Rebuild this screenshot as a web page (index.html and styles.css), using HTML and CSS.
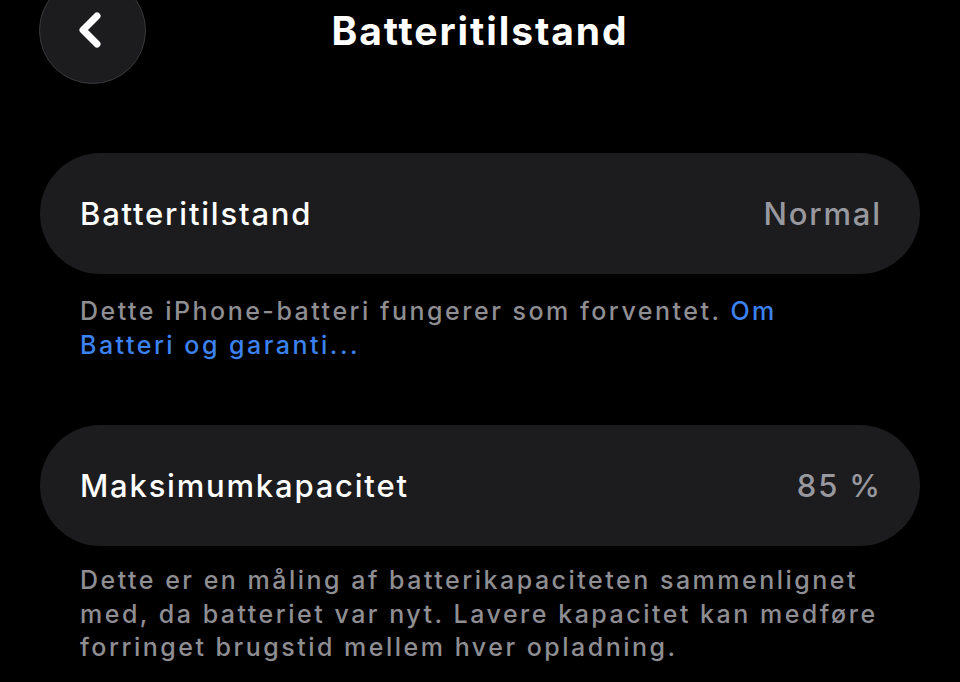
FILE: index.html
```html
<!DOCTYPE html>
<html>
  <head>
    <title>Batteritilstand</title>
    <link rel="stylesheet" href="styles.css">
  </head>

  <body>
    <div class="header">
      <button class="back-btn">
        <svg width="107" height="107" viewBox="0 0 107 107">
          <path d="M58 39 L44 53 L58 67" fill="none" stroke="#fff" stroke-width="7" stroke-linecap="round" stroke-linejoin="round" />
        </svg>
      </button>
      <h1 class="title">Batteritilstand</h1>
      <div></div>
    </div>

    <div class="group first">
      <div class="row">
        <span class="label">Batteritilstand</span>
        <span class="value">Normal</span>
      </div>
      <p class="footer">Dette iPhone-batteri fungerer som forventet. <a href="#">Om<br>Batteri og garanti...</a></p>
    </div>

    <div class="group second">
      <div class="row">
        <span class="label">Maksimumkapacitet</span>
        <span class="value">85 %</span>
      </div>
      <p class="footer">Dette er en måling af batterikapaciteten sammenlignet<br>med, da batteriet var nyt. Lavere kapacitet kan medføre<br>forringet brugstid mellem hver opladning.</p>
    </div>
  </body>
</html>
```

FILE: styles.css
```css
body {
  margin: 0;
  background: #000;
  color: #fff;
  font-family: Inter, "Noto Sans", sans-serif;
  overflow: hidden;
}

.header {
  display: grid;
  grid-template-columns: 1fr auto 1fr;
  align-items: center;
  height: 107px;
  margin-top: -23px;
  padding-left: 39px;
}

.back-btn {
  width: 107px;
  height: 107px;
  border-radius: 50%;
  background: #1c1c1e;
  border: 1.5px solid #3a3a3c;
  padding: 0;
  margin: 0;
  overflow: hidden;
}

.back-btn svg {
  display: block;
  margin: -1.5px;
}

.title {
  margin: 0 0 0 -39px;
  font-size: 39px;
  font-weight: 700;
  letter-spacing: 1.9px;
}

.group {
  margin: 0 40px;
}

.group.first {
  margin-top: 69px;
  margin-bottom: 63px;
}

.row {
  height: 121px;
  border-radius: 61px;
  background: #1c1c1e;
  padding: 0 40px;
  display: flex;
  align-items: center;
  justify-content: space-between;
  font-size: 31px;
  font-weight: 500;
  letter-spacing: 1.8px;
}

.value {
  color: #98989f;
  margin-right: -1.8px;
}

.footer {
  margin: 21px 0 0;
  padding-left: 40px;
  font-size: 25px;
  line-height: 33.5px;
  letter-spacing: 2.5px;
  color: #8e8e93;
  font-weight: 500;
}

.second .footer {
  margin-top: 18px;
}

.footer a {
  color: #3c82f0;
  text-decoration: none;
}
```
